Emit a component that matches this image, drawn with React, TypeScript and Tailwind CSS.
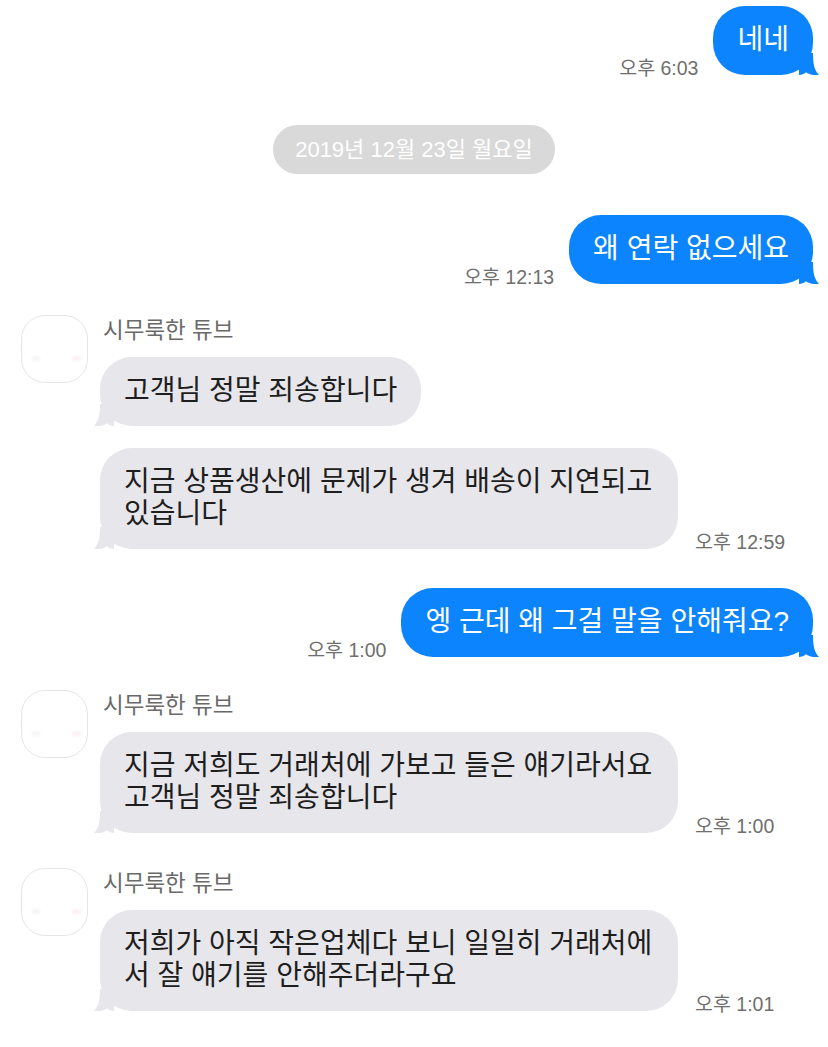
import type { ReactNode } from "react";

const FONT = { fontFamily: '"Liberation Sans", "Noto Sans CJK KR", "Noto Sans", sans-serif' };

function Tail({ side, color }: { side: "left" | "right"; color: string }) {
  return (
    <svg
      className={`absolute bottom-0 w-[20px] h-[22px] ${side === "right" ? "right-[-6px]" : "left-[-6px] -scale-x-100"}`}
      viewBox="0 0 20 22"
      fill={color}
    >
      <path d="M0 0 H14 C14 10 15 17 20 22 C15 22.6 10 21.4 7 19.2 C5 21 2.5 22 0 22 Z" />
    </svg>
  );
}

function Bubble({ mine, children, wide }: { mine?: boolean; children: ReactNode; wide?: boolean }) {
  return (
    <div
      className={`relative rounded-[32px] px-6 pt-[18px] pb-[19px] text-[28px] leading-[32px] whitespace-nowrap ${
        mine ? "bg-[#0b84fe] text-white" : "bg-[#e6e6eb] text-[#1e1e1e]"
      } ${wide ? "w-[578px]" : ""}`}
    >
      <Tail side={mine ? "right" : "left"} color={mine ? "#0b84fe" : "#e6e6eb"} />
      <div className="relative">{children}</div>
    </div>
  );
}

function Time({ children }: { children: ReactNode }) {
  return <span className="text-[19.5px] leading-[20px] text-[#6f6f6f] mb-[-3px] whitespace-nowrap">{children}</span>;
}

function Outgoing({ text, time, className }: { text: string; time: string; className: string }) {
  return (
    <div className={`flex justify-end items-end gap-[15px] pr-[15px] ${className}`}>
      <Time>{time}</Time>
      <Bubble mine>{text}</Bubble>
    </div>
  );
}

function Avatar() {
  return (
    <div className="relative w-[67px] h-[68px] shrink-0 rounded-[24px] border border-[#e6e6e6] bg-white">
      <span className="absolute left-[10px] top-[40px] w-[8px] h-[5px] bg-[#f8f5f6] blur-[1px]" />
      <span className="absolute left-[50px] top-[40px] w-[9px] h-[5px] bg-[#fcf2f5] blur-[1px]" />
    </div>
  );
}

type Msg = { lines: string[]; time?: string };

function Incoming({ messages, className }: { messages: Msg[]; className: string }) {
  return (
    <div className={`flex gap-[12px] pl-[21px] ${className}`}>
      <Avatar />
      <div className="flex flex-col">
        <div className="text-[22.5px] leading-[26px] text-[#6a6a6a] pl-[3px] mt-[3px] mb-[13px]">시무룩한 튜브</div>
        {messages.map((m, i) => (
          <div key={i} className={`flex items-end gap-[17px] ${i > 0 ? "mt-[22px]" : ""}`}>
            <Bubble wide={m.lines.length > 1}>
              {m.lines.map((l, j) => (
                <div key={j}>{l}</div>
              ))}
            </Bubble>
            {m.time && <Time>{m.time}</Time>}
          </div>
        ))}
      </div>
    </div>
  );
}

export default function App() {
  return (
    <div className="w-[828px] h-[1047px] bg-white overflow-hidden pt-[6px]" style={FONT}>
      <Outgoing text="네네" time="오후 6:03" className="" />

      <div className="flex justify-center mt-[50px]">
        <div className="rounded-full bg-[#d9d9d9] h-[49px] px-[22px] flex items-center text-[22px] text-white">
          2019년 12월 23일 월요일
        </div>
      </div>

      <Outgoing text="왜 연락 없으세요" time="오후 12:13" className="mt-[41px]" />

      <Incoming
        className="mt-[31px]"
        messages={[
          { lines: ["고객님 정말 죄송합니다"] },
          { lines: ["지금 상품생산에 문제가 생겨 배송이 지연되고", "있습니다"], time: "오후 12:59" },
        ]}
      />

      <Outgoing text="엥 근데 왜 그걸 말을 안해줘요?" time="오후 1:00" className="mt-[39px]" />

      <Incoming
        className="mt-[33px]"
        messages={[{ lines: ["지금 저희도 거래처에 가보고 들은 얘기라서요", "고객님 정말 죄송합니다"], time: "오후 1:00" }]}
      />

      <Incoming
        className="mt-[35px]"
        messages={[{ lines: ["저희가 아직 작은업체다 보니 일일히 거래처에", "서 잘 얘기를 안해주더라구요"], time: "오후 1:01" }]}
      />
    </div>
  );
}
